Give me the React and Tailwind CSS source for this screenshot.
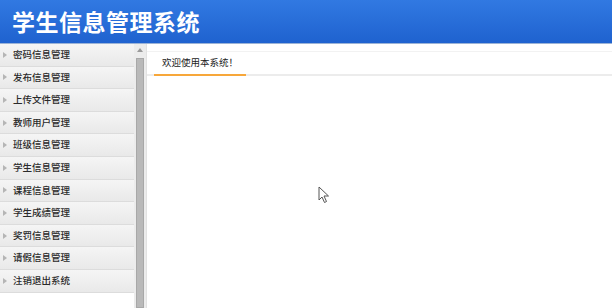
import React from 'react';

const menus = [
  '密码信息管理',
  '发布信息管理',
  '上传文件管理',
  '教师用户管理',
  '班级信息管理',
  '学生信息管理',
  '课程信息管理',
  '学生成绩管理',
  '奖罚信息管理',
  '请假信息管理',
  '注销退出系统',
];

const font = { fontFamily: '"Noto Sans CJK SC", "Noto Sans", sans-serif' };

export default function App() {
  return (
    <div className="relative w-[612px] h-[308px] overflow-hidden bg-white flex flex-col" style={font}>
      <div className="h-[44px] shrink-0 bg-gradient-to-b from-[#3179e2] to-[#1f62cf] border-b border-[#9bb3d6] flex items-center pl-[12px]">
        <h1 className="text-white font-bold text-[23px] leading-none tracking-[0.5px]">学生信息管理系统</h1>
      </div>
      <div className="flex flex-1 min-h-0">
        <div className="w-[134px] shrink-0 flex flex-col">
          {menus.map((m) => (
            <div
              key={m}
              className="h-[22.6px] shrink-0 flex items-center bg-gradient-to-b from-[#f5f5f5] to-[#e9e9e9] border-b border-[#dcdcdc]"
            >
              <span className="ml-[3px] w-0 h-0 border-y-[3px] border-y-transparent border-l-[4px] border-l-[#b5b5b5]" />
              <span className="ml-[6px] text-[9.5px] font-medium text-[#2a2a2a] leading-none">{m}</span>
            </div>
          ))}
        </div>
        <div className="w-[12px] shrink-0 bg-[#ececec] flex flex-col items-center">
          <span className="mt-[4px] w-0 h-0 border-x-[3px] border-x-transparent border-b-[4px] border-b-[#9a9a9a]" />
          <div className="mt-[6px] w-[8px] flex-1 bg-[#b9b9b9] border border-[#a8a8a8]" />
        </div>
        <div className="flex-1 border-l border-[#e2e2e2] flex flex-col">
          <div className="h-[8px] shrink-0 border-b border-[#f2f2f2]" />
          <div className="h-[24px] shrink-0 flex items-end border-b-2 border-[#ececec] pl-[7px]">
            <div className="w-[92px] h-[24px] flex items-center pl-[8px] pb-[1px] border-b-2 border-[#f7a73a] -mb-[2px]">
              <span className="text-[9.5px] text-[#222] leading-none">欢迎使用本系统！</span>
            </div>
          </div>
          <div className="flex-1 bg-white" />
        </div>
      </div>
      <svg className="absolute left-[318px] top-[186px]" width="12" height="18" viewBox="0 0 12 18">
        <path d="M1 1 L1 14 L4 11 L6.5 16.5 L8.5 15.5 L6 10 L10.5 10 Z" fill="#fff" stroke="#555" strokeWidth="1" strokeLinejoin="round" />
      </svg>
    </div>
  );
}
